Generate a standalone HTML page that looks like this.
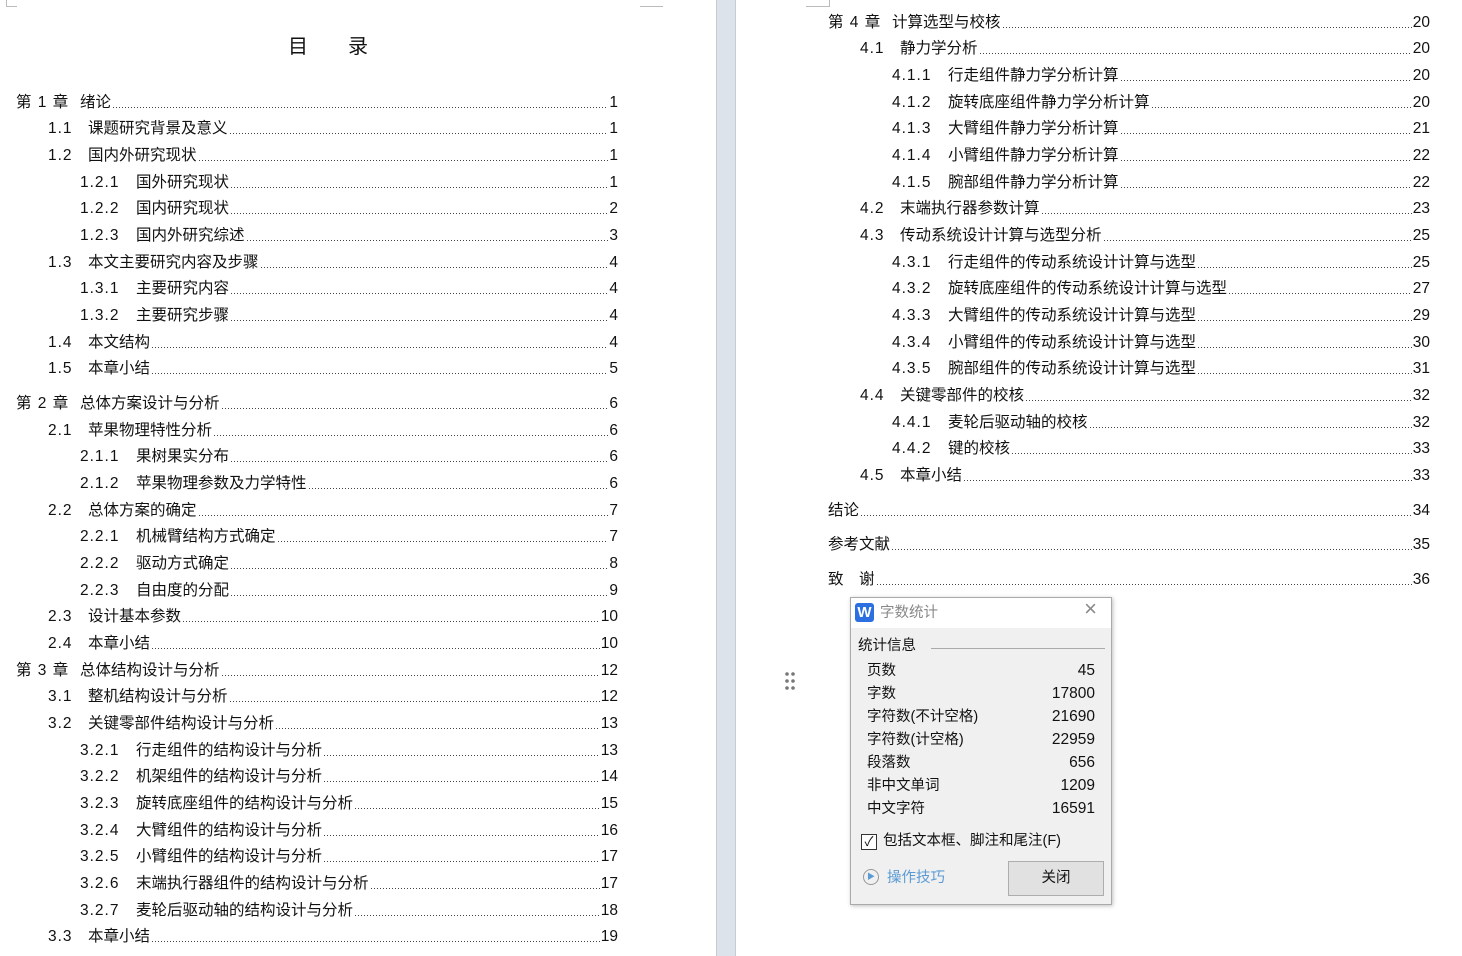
<!DOCTYPE html><html><head><meta charset="utf-8"><style>
body{margin:0;width:1462px;height:956px;background:#fff;position:relative;overflow:hidden;font-family:"Liberation Sans","Noto Sans CJK SC",sans-serif;color:#111}
.r{position:absolute;height:18px;display:flex;align-items:flex-end;font-size:15.5px;line-height:18px;white-space:nowrap}
.n{display:inline-block;letter-spacing:1px}
.d{flex:1;height:1px;margin:0 1px 4px 2px;background-image:linear-gradient(to right,#444 1px,transparent 1px);background-size:3px 1px;background-repeat:repeat-x}
.gap{position:absolute;left:716px;top:0;width:18px;height:956px;background:#dde3ea;border-left:1px solid #c8ccd0;border-right:1px solid #c8ccd0}
.dlg{position:absolute;left:850px;top:597px;width:260px;height:306px;background:#f0f0f0;border:1px solid #aaa;box-shadow:1px 1px 4px rgba(0,0,0,.25);font-size:14.5px}
.dlg div{line-height:18px}
.dlg .t{height:30px;background:#fff;position:relative}
.row{position:absolute;left:16px;width:228px;display:flex;justify-content:space-between;align-items:center;height:18px}
.row span{line-height:18px}
.row span+span{font-size:15.5px}
</style></head><body>
<div style="position:absolute;top:0;width:10px;height:6px;border-left:1px solid #bbb;border-bottom:1px solid #bbb;left:6px"></div>
<div style="position:absolute;left:640px;top:0;width:23px;height:6px;border-bottom:1px solid #bbb"></div>
<div style="position:absolute;left:806px;top:0;width:23px;height:6px;border-right:1px solid #bbb;border-bottom:1px solid #bbb"></div>
<div class="gap"></div>
<div style="position:absolute;left:288px;top:30px;font-size:20px">目<span style="display:inline-block;width:40px"></span>录</div>
<div id="L"></div>
<div style="position:absolute;left:785px;top:672px;width:10px;height:20px">
<svg width="10" height="20"><g fill="#777"><circle cx="2" cy="2" r="1.8"/><circle cx="8" cy="2" r="1.8"/><circle cx="2" cy="9" r="1.8"/><circle cx="8" cy="9" r="1.8"/><circle cx="2" cy="16" r="1.8"/><circle cx="8" cy="16" r="1.8"/></g></svg></div>
<div class="dlg">
<div class="t"><div style="position:absolute;left:4px;top:5px;width:19px;height:19px;background:#2b6fe0;border-radius:3px;color:#fff;font-weight:bold;font-size:15px;text-align:center;line-height:19px">W</div>
<span style="position:absolute;left:29px;top:6px;color:#888">字数统计</span>
<span style="position:absolute;right:14px;top:2px;color:#888;font-size:22px;font-weight:300">×</span></div>
<div style="position:absolute;left:7px;top:39px">统计信息</div>
<div style="position:absolute;left:80px;right:6px;top:50px;border-top:1px solid #aaa"></div>
<div class="row" style="top:64px"><span>页数</span><span>45</span></div>
<div class="row" style="top:87px"><span>字数</span><span>17800</span></div>
<div class="row" style="top:110px"><span>字符数(不计空格)</span><span>21690</span></div>
<div class="row" style="top:133px"><span>字符数(计空格)</span><span>22959</span></div>
<div class="row" style="top:156px"><span>段落数</span><span>656</span></div>
<div class="row" style="top:179px"><span>非中文单词</span><span>1209</span></div>
<div class="row" style="top:202px"><span>中文字符</span><span>16591</span></div>
<div style="position:absolute;left:10px;top:236px;width:14px;height:14px;border:1px solid #333;background:#fff;font-size:13px;line-height:14px;text-align:center">✓</div>
<div style="position:absolute;left:32px;top:234px">包括文本框、脚注和尾注(F)</div>
<div style="position:absolute;left:12px;top:271px;width:14px;height:14px;border:1.5px solid #999;border-radius:50%;font-size:8px;line-height:14px;text-align:center;color:#5b9bd5">▶</div>
<div style="position:absolute;left:36px;top:271px;color:#5b9bd5">操作技巧</div>
<div style="position:absolute;left:157px;top:263px;width:94px;height:33px;background:#e1e1e1;border:1px solid #adadad;text-align:center;line-height:33px">关闭</div>
</div>
<script>
const L=[[1,101,"第 1 章","绪论","1"],[2,127,"1.1","课题研究背景及意义","1"],[2,154,"1.2","国内外研究现状","1"],[3,181,"1.2.1","国外研究现状","1"],[3,207,"1.2.2","国内研究现状","2"],[3,234,"1.2.3","国内外研究综述","3"],[2,261,"1.3","本文主要研究内容及步骤","4"],[3,287,"1.3.1","主要研究内容","4"],[3,314,"1.3.2","主要研究步骤","4"],[2,341,"1.4","本文结构","4"],[2,367,"1.5","本章小结","5"],[1,402,"第 2 章","总体方案设计与分析","6"],[2,429,"2.1","苹果物理特性分析","6"],[3,455,"2.1.1","果树果实分布","6"],[3,482,"2.1.2","苹果物理参数及力学特性","6"],[2,509,"2.2","总体方案的确定","7"],[3,535,"2.2.1","机械臂结构方式确定","7"],[3,562,"2.2.2","驱动方式确定","8"],[3,589,"2.2.3","自由度的分配","9"],[2,615,"2.3","设计基本参数","10"],[2,642,"2.4","本章小结","10"],[1,669,"第 3 章","总体结构设计与分析","12"],[2,695,"3.1","整机结构设计与分析","12"],[2,722,"3.2","关键零部件结构设计与分析","13"],[3,749,"3.2.1","行走组件的结构设计与分析","13"],[3,775,"3.2.2","机架组件的结构设计与分析","14"],[3,802,"3.2.3","旋转底座组件的结构设计与分析","15"],[3,829,"3.2.4","大臂组件的结构设计与分析","16"],[3,855,"3.2.5","小臂组件的结构设计与分析","17"],[3,882,"3.2.6","末端执行器组件的结构设计与分析","17"],[3,909,"3.2.7","麦轮后驱动轴的结构设计与分析","18"],[2,935,"3.3","本章小结","19"]];
const R=[[1,21,"第 4 章","计算选型与校核","20"],[2,47,"4.1","静力学分析","20"],[3,74,"4.1.1","行走组件静力学分析计算","20"],[3,101,"4.1.2","旋转底座组件静力学分析计算","20"],[3,127,"4.1.3","大臂组件静力学分析计算","21"],[3,154,"4.1.4","小臂组件静力学分析计算","22"],[3,181,"4.1.5","腕部组件静力学分析计算","22"],[2,207,"4.2","末端执行器参数计算","23"],[2,234,"4.3","传动系统设计计算与选型分析","25"],[3,261,"4.3.1","行走组件的传动系统设计计算与选型","25"],[3,287,"4.3.2","旋转底座组件的传动系统设计计算与选型","27"],[3,314,"4.3.3","大臂组件的传动系统设计计算与选型","29"],[3,341,"4.3.4","小臂组件的传动系统设计计算与选型","30"],[3,367,"4.3.5","腕部组件的传动系统设计计算与选型","31"],[2,394,"4.4","关键零部件的校核","32"],[3,421,"4.4.1","麦轮后驱动轴的校核","32"],[3,447,"4.4.2","键的校核","33"],[2,474,"4.5","本章小结","33"],[0,509,"","结论","34"],[0,543,"","参考文献","35"],[0,578,"","致　谢","36"]];
let h="";
function add(a,x0,right){for(const[l,y,n,t,p]of a){let x=x0+(l==2?32:l==3?64:0);let nw=l==1?64:l==2?40:l==3?56:0;
h+=`<div class="r" style="left:${x}px;top:${y-7}px;width:${right-x}px">${nw?`<span class="n" style="width:${nw}px">${n}</span>`:""}<span>${t}</span><span class="d"></span><span>${p}</span></div>`;}}
add(L,16,618);add(R,828,1430);
document.getElementById("L").innerHTML=h;
</script>
</body></html>
